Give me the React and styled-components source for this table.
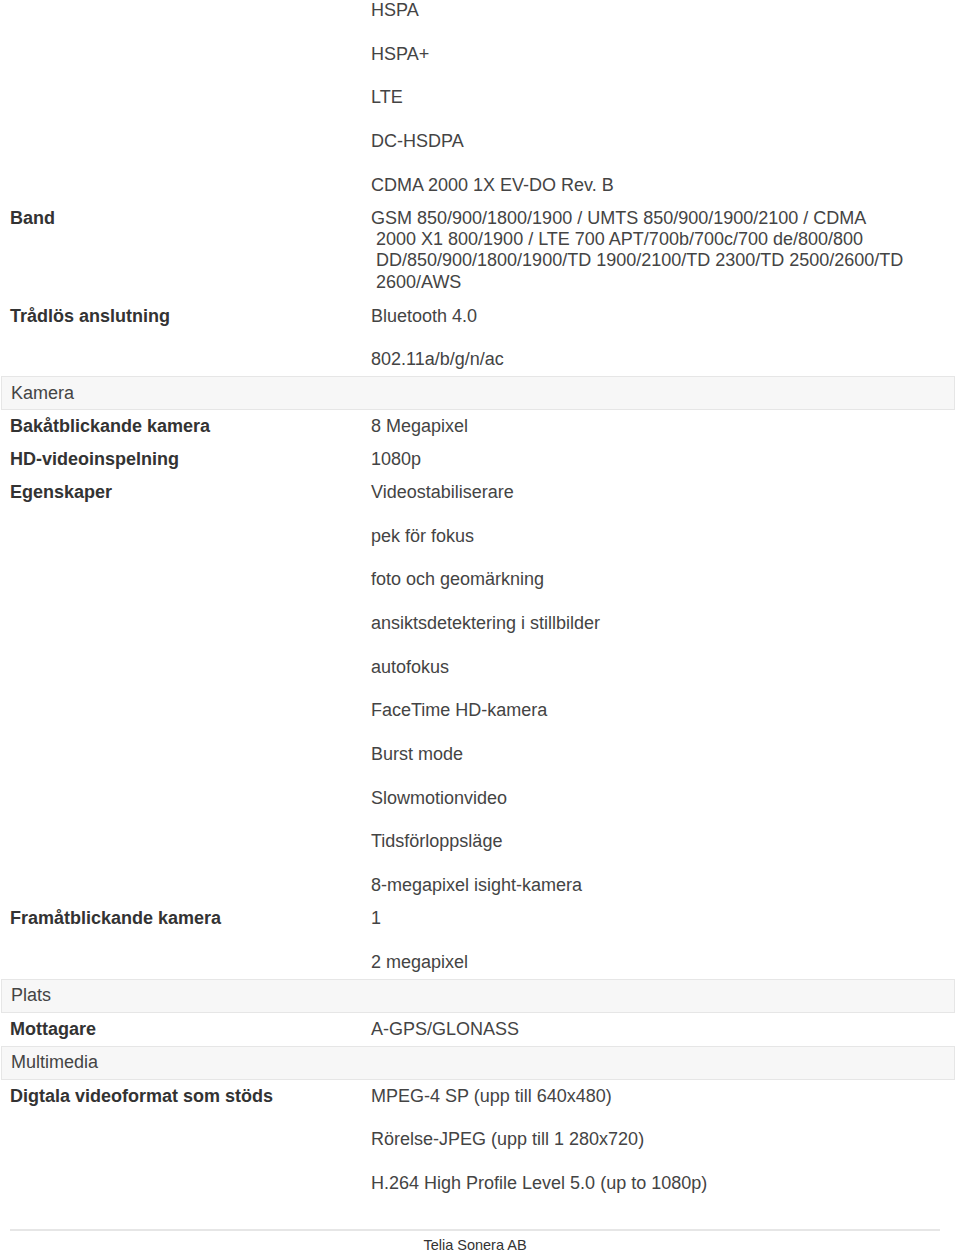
import React from 'react';
import styled, { createGlobalStyle } from 'styled-components';

const GlobalStyle = createGlobalStyle`
  html, body {
    margin: 0;
    padding: 0;
    background: #fff;
  }
  body {
    font-family: "Liberation Sans", Arial, sans-serif;
    color: #333;
  }
`;

const specs = [
  { cont: true, values: ['HSPA', 'HSPA+', 'LTE', 'DC-HSDPA', 'CDMA 2000 1X EV-DO Rev. B'] },
  {
    label: 'Band',
    lines: [
      'GSM 850/900/1800/1900 / UMTS 850/900/1900/2100 / CDMA',
      ' 2000 X1 800/1900 / LTE 700 APT/700b/700c/700 de/800/800',
      ' DD/850/900/1800/1900/TD 1900/2100/TD 2300/TD 2500/2600/TD',
      ' 2600/AWS',
    ],
  },
  { label: 'Trådlös anslutning', values: ['Bluetooth 4.0', '802.11a/b/g/n/ac'] },
  { section: 'Kamera' },
  { label: 'Bakåtblickande kamera', values: ['8 Megapixel'] },
  { label: 'HD-videoinspelning', values: ['1080p'] },
  {
    label: 'Egenskaper',
    values: [
      'Videostabiliserare',
      'pek för fokus',
      'foto och geomärkning',
      'ansiktsdetektering i stillbilder',
      'autofokus',
      'FaceTime HD-kamera',
      'Burst mode',
      'Slowmotionvideo',
      'Tidsförloppsläge',
      '8-megapixel isight-kamera',
    ],
  },
  { label: 'Framåtblickande kamera', values: ['1', '2 megapixel'] },
  { section: 'Plats' },
  { label: 'Mottagare', values: ['A-GPS/GLONASS'] },
  { section: 'Multimedia' },
  {
    label: 'Digtala videoformat som stöds',
    values: [
      'MPEG-4 SP (upp till 640x480)',
      'Rörelse-JPEG (upp till 1 280x720)',
      'H.264 High Profile Level 5.0 (up to 1080p)',
    ],
  },
];

export default function App() {
  return (
    <Page>
      <GlobalStyle />
      <Table>
        {specs.map((row, i) =>
          row.section ? (
            <SectionBar key={i}>{row.section}</SectionBar>
          ) : (
            <Row key={i} cont={row.cont} wrapped={!!row.lines}>
              <Label>{row.label}</Label>
              {row.lines ? (
                <Wrapped>
                  {row.lines.map((l) => (
                    <Line key={l}>{l}</Line>
                  ))}
                </Wrapped>
              ) : (
                <ValueList>
                  {row.values.map((v) => (
                    <Value key={v}>{v}</Value>
                  ))}
                </ValueList>
              )}
            </Row>
          )
        )}
      </Table>
      <Footer>Telia Sonera AB</Footer>
    </Page>
  );
}

const Page = styled.div`
  width: 960px;
  display: flex;
  flex-direction: column;
`;

const Table = styled.div`
  width: 954px;
  margin-left: 1px;
  display: flex;
  flex-direction: column;
  font-size: 18px;
  line-height: 21.33px;
`;

const Row = styled.div`
  display: grid;
  grid-template-columns: 370px 1fr;
  padding: ${({ cont, wrapped }) =>
    cont ? '0 0 5.83px' : wrapped ? '5.83px 0 6.83px' : '5.83px 0'};
`;

const Label = styled.div`
  padding-left: 9px;
  font-weight: bold;
  color: #333;
  white-space: nowrap;
`;

const ValueList = styled.div`
  display: flex;
  flex-direction: column;
  gap: 22.33px;
`;

const Value = styled.div`
  color: #444;
  white-space: nowrap;
`;

const Wrapped = styled.div`
  display: flex;
  flex-direction: column;
`;

const Line = styled.div`
  white-space: pre;
  color: #444;
`;

const SectionBar = styled.div`
  background: #f7f7f7;
  border: 1px solid #e6e6e6;
  padding: 5.33px 9px;
  color: #444;
`;

const Footer = styled.div`
  margin: 29px 20px 0 10px;
  border-top: 2px solid #e6e6e6;
  padding-top: 6px;
  text-align: center;
  font-size: 14.5px;
  line-height: 17px;
  color: #333;
`;
